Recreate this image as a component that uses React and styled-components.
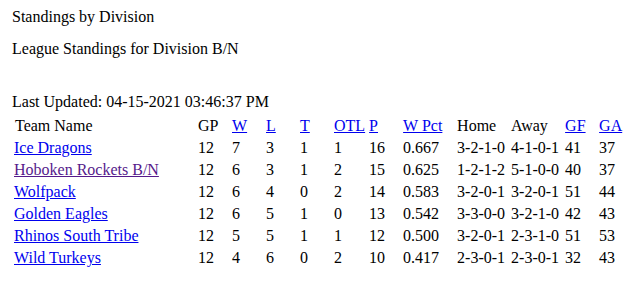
import React from "react";
import styled, { createGlobalStyle } from "styled-components";

const Global = createGlobalStyle`
  html, body { margin: 0; padding: 0; background: #ffffff; }
  body {
    font-family: "Liberation Serif", "Times New Roman", serif;
    font-size: 16px;
    color: #000000;
  }
`;

const Page = styled.div`
  padding: 8px 0 0 12px;
`;

const Line = styled.div`
  margin-bottom: ${(p) => p.$after || 0}px;
`;

const Table = styled.table`
  border-collapse: separate;
  border-spacing: 2px;
  margin: 3px 0 0 -1px;
  font-size: 16px;
`;

const Cell = styled.td`
  padding: 1px 1px 1px ${(p) => (p.$indent ? 2 : 1)}px;
  text-align: left;
  white-space: nowrap;
  width: ${(p) => (p.$w ? `${p.$w - (p.$indent ? 1 : 0)}px` : "auto")};
`;

const Link = styled.a`
  color: ${(p) => (p.$visited ? "#551a8b" : "#0000ee")};
  text-decoration: underline;
  cursor: pointer;
`;

const columns = [
  { label: "Team Name", w: 180 },
  { label: "GP", w: 30 },
  { label: "W", w: 30, link: true },
  { label: "L", w: 30, link: true },
  { label: "T", w: 30, link: true },
  { label: "OTL", w: 31, link: true },
  { label: "P", w: 30, link: true },
  { label: "W Pct", w: 50, link: true },
  { label: "Home", w: 50 },
  { label: "Away", w: 50 },
  { label: "GF", w: 30, link: true },
  { label: "GA", link: true },
];

const rows = [
  ["Ice Dragons", "12", "7", "3", "1", "1", "16", "0.667", "3-2-1-0", "4-1-0-1", "41", "37"],
  ["Hoboken Rockets B/N", "12", "6", "3", "1", "2", "15", "0.625", "1-2-1-2", "5-1-0-0", "40", "37"],
  ["Wolfpack", "12", "6", "4", "0", "2", "14", "0.583", "3-2-0-1", "3-2-0-1", "51", "44"],
  ["Golden Eagles", "12", "6", "5", "1", "0", "13", "0.542", "3-3-0-0", "3-2-1-0", "42", "43"],
  ["Rhinos South Tribe", "12", "5", "5", "1", "1", "12", "0.500", "3-2-0-1", "2-3-1-0", "51", "53"],
  ["Wild Turkeys", "12", "4", "6", "0", "2", "10", "0.417", "2-3-0-1", "2-3-0-1", "32", "43"],
];

export default function App() {
  return (
    <Page>
      <Global />
      <Line $after={14}>Standings by Division</Line>
      <Line $after={35}>League Standings for Division B/N</Line>
      <Line>Last Updated: 04-15-2021 03:46:37 PM</Line>
      <Table>
        <tbody>
          <tr>
            {columns.map((c, i) => (
              <Cell key={c.label} $w={c.w} $indent={i === 0}>
                {c.link ? <Link>{c.label}</Link> : c.label}
              </Cell>
            ))}
          </tr>
          {rows.map((r) => (
            <tr key={r[0]}>
              {r.map((v, i) => (
                <Cell key={i} $w={columns[i].w}>
                  {i === 0 ? (
                    <Link $visited={v === "Hoboken Rockets B/N"}>{v}</Link>
                  ) : (
                    v
                  )}
                </Cell>
              ))}
            </tr>
          ))}
        </tbody>
      </Table>
    </Page>
  );
}
